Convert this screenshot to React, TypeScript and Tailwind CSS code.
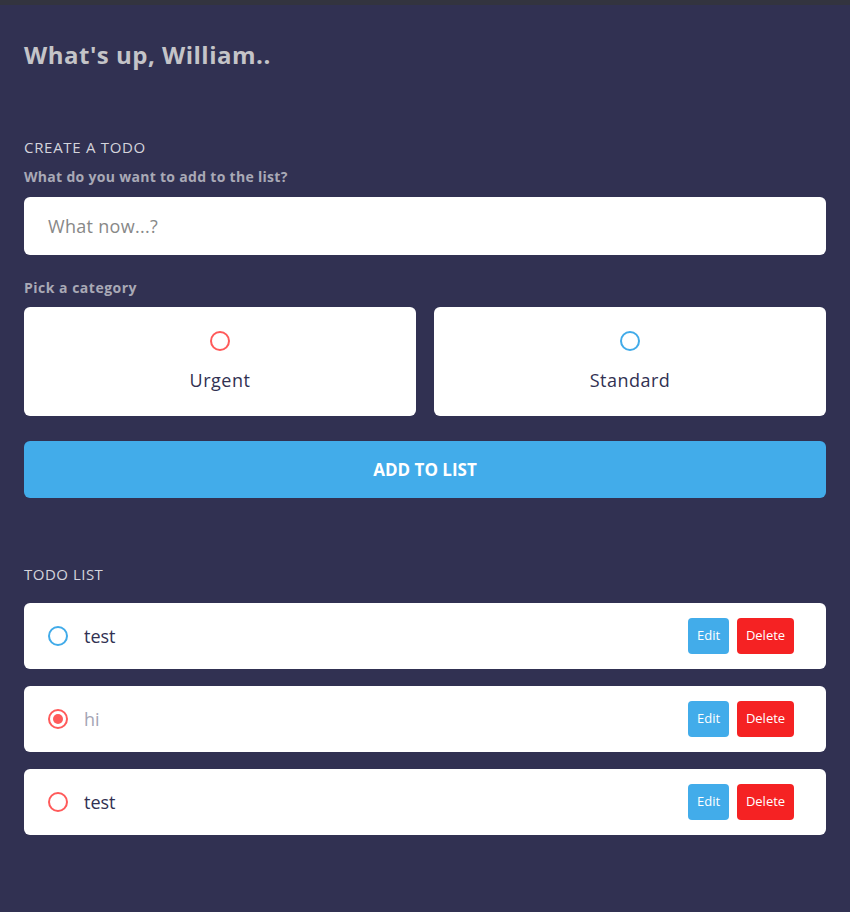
import React from "react";

const font = { fontFamily: "'Open Sans', 'Noto Sans', sans-serif" };

function Ring({ color, filled }: { color: string; filled?: boolean }) {
  return (
    <span
      className="flex h-5 w-5 items-center justify-center rounded-full border-2"
      style={{ borderColor: color }}
    >
      {filled && <span className="h-[10px] w-[10px] rounded-full" style={{ background: color }} />}
    </span>
  );
}

const todos = [
  { text: "test", color: "#41abe9", done: false },
  { text: "hi", color: "#ff5a5a", done: true },
  { text: "test", color: "#ff5a5a", done: false },
];

export default function App() {
  return (
    <div className="min-h-screen bg-[#313152] font-['Open_Sans',sans-serif]" style={font}>
      <div className="h-[5px] bg-[#33343f]" />
      <div className="px-6">
        <h1 className="mt-[34px] text-[24px] font-bold leading-[32px] tracking-[0.5px] text-[#c4c4c8]">What's up, William..</h1>

        <h2 className="mt-[66px] text-[15px] leading-[20px] tracking-[0.7px] text-[#d4d4dc]">CREATE A TODO</h2>
        <p className="mt-[11px] text-[14px] font-bold leading-[18px] tracking-[0.3px] text-[#a9a9b6]">What do you want to add to the list?</p>
        <div className="mt-[11px] flex h-[58px] items-center rounded-md bg-white px-6">
          <span className="text-[18px] tracking-[0.3px] text-[#888]">What now...?</span>
        </div>

        <p className="mt-[24px] text-[14px] font-bold leading-[18px] tracking-[0.5px] text-[#a9a9b6]">Pick a category</p>
        <div className="mt-[10px] grid grid-cols-2 gap-[18px]">
          {[
            { label: "Urgent", color: "#ff5a5a" },
            { label: "Standard", color: "#41abe9" },
          ].map((c) => (
            <div key={c.label} className="flex h-[109px] flex-col items-center rounded-md bg-white pt-6">
              <Ring color={c.color} />
              <span className="mt-[17px] text-[18px] leading-[24px] tracking-[0.5px] text-[#313152]">{c.label}</span>
            </div>
          ))}
        </div>

        <button className="mt-[25px] flex h-[57px] w-full items-center justify-center rounded-md bg-[#42acea] text-[17px] font-bold text-white">
          ADD TO LIST
        </button>

        <h2 className="mt-[66px] text-[15px] leading-[20px] tracking-[0.5px] text-[#d4d4dc]">TODO LIST</h2>
        <div className="mt-[19px] flex flex-col gap-[17px]">
          {todos.map((t, i) => (
            <div key={i} className="flex h-[66px] items-center rounded-md bg-white pl-6 pr-8">
              <Ring color={t.color} filled={t.done} />
              <span className={`ml-4 flex-1 text-[18px] ${t.done ? "text-[#a5a5b5]" : "text-[#313152]"}`}>{t.text}</span>
              <span className="flex h-9 w-[41px] items-center justify-center rounded-[4px] bg-[#42acea] text-[13px] text-white">Edit</span>
              <span className="ml-2 flex h-9 w-[57px] items-center justify-center rounded-[4px] bg-[#f52223] text-[13px] text-white">Delete</span>
            </div>
          ))}
        </div>
      </div>
    </div>
  );
}
